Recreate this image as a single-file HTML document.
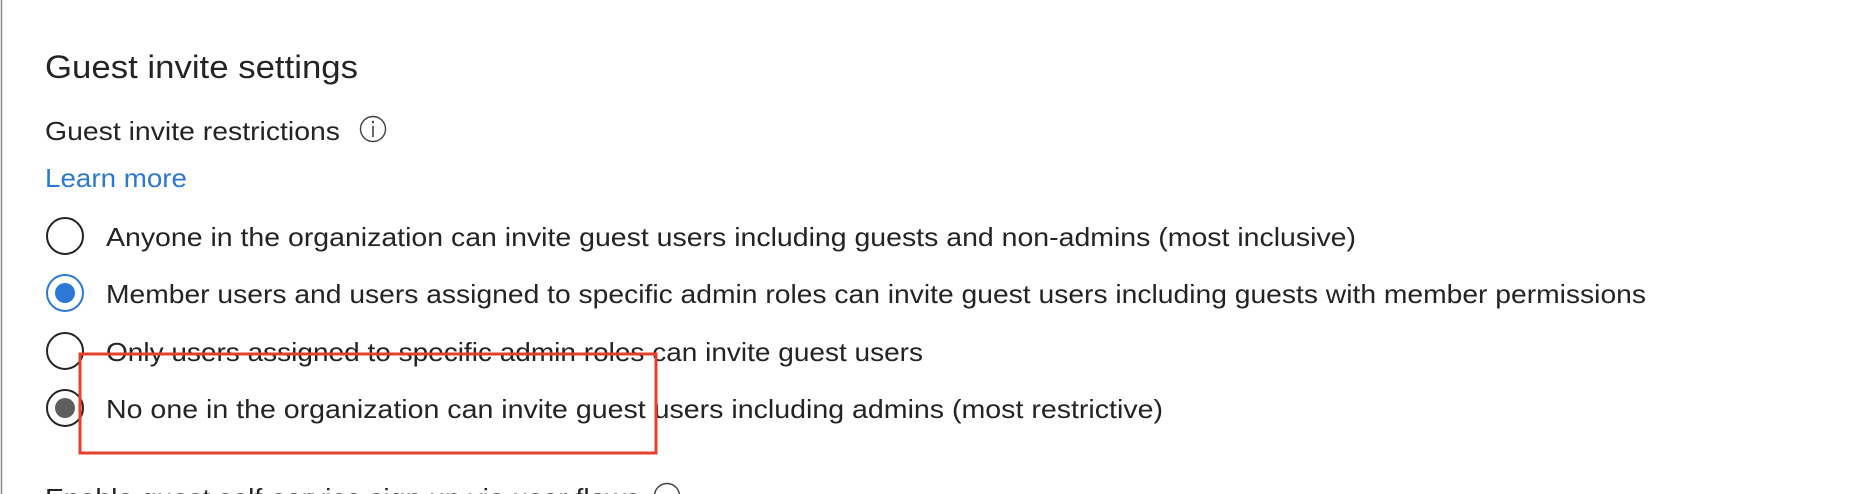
<!DOCTYPE html>
<html><head><meta charset="utf-8"><style>
html,body{margin:0;padding:0;background:#fff;width:1860px;height:494px;overflow:hidden}
svg{display:block}
text{font-family:"Liberation Sans",sans-serif;fill:#242424}
</style></head><body>
<svg width="1860" height="494" viewBox="0 0 1860 494" xmlns="http://www.w3.org/2000/svg">
<rect x="0" y="0" width="1860" height="494" fill="#fff"/>
<line x1="1.5" y1="0" x2="1.5" y2="494" stroke="#8a8886" stroke-width="1.5"/>
<text x="45" y="78" font-size="32" textLength="313" lengthAdjust="spacingAndGlyphs">Guest invite settings</text>
<text x="45" y="140" font-size="26" textLength="295" lengthAdjust="spacingAndGlyphs">Guest invite restrictions</text>
<circle cx="373" cy="129" r="12.5" fill="none" stroke="#424242" stroke-width="1.4"/>
<line x1="373" y1="126" x2="373" y2="137" stroke="#424242" stroke-width="1.6"/>
<circle cx="373" cy="122" r="1.2" fill="#424242"/>
<text x="45" y="187" font-size="26" textLength="142" lengthAdjust="spacingAndGlyphs" style="fill:#2b78d6">Learn more</text>

<circle cx="65" cy="236" r="18" fill="#fff" stroke="#242424" stroke-width="2"/>
<text x="106" y="246" font-size="26" textLength="1250" lengthAdjust="spacingAndGlyphs">Anyone in the organization can invite guest users including guests and non-admins (most inclusive)</text>

<circle cx="65" cy="293" r="18" fill="#fff" stroke="#2b78d6" stroke-width="2"/>
<circle cx="65" cy="293" r="10" fill="#2b78d6"/>
<text x="106" y="303" font-size="26" textLength="1540" lengthAdjust="spacingAndGlyphs">Member users and users assigned to specific admin roles can invite guest users including guests with member permissions</text>

<circle cx="65" cy="351" r="18" fill="#fff" stroke="#242424" stroke-width="2"/>
<text x="106" y="361" font-size="26" textLength="817" lengthAdjust="spacingAndGlyphs">Only users assigned to specific admin roles can invite guest users</text>

<circle cx="65" cy="408" r="18" fill="#fff" stroke="#242424" stroke-width="2"/>
<circle cx="65" cy="408" r="10" fill="#605e5c"/>
<text x="106" y="418" font-size="26" textLength="1057" lengthAdjust="spacingAndGlyphs">No one in the organization can invite guest users including admins (most restrictive)</text>

<rect x="80" y="354" width="576" height="99" fill="none" stroke="#e5402b" stroke-width="3"/>

<text x="45" y="507" font-size="26" textLength="595" lengthAdjust="spacingAndGlyphs">Enable guest self-service sign up via user flows</text>
<circle cx="667" cy="496" r="12.5" fill="none" stroke="#424242" stroke-width="1.4"/>
</svg>
</body></html>
